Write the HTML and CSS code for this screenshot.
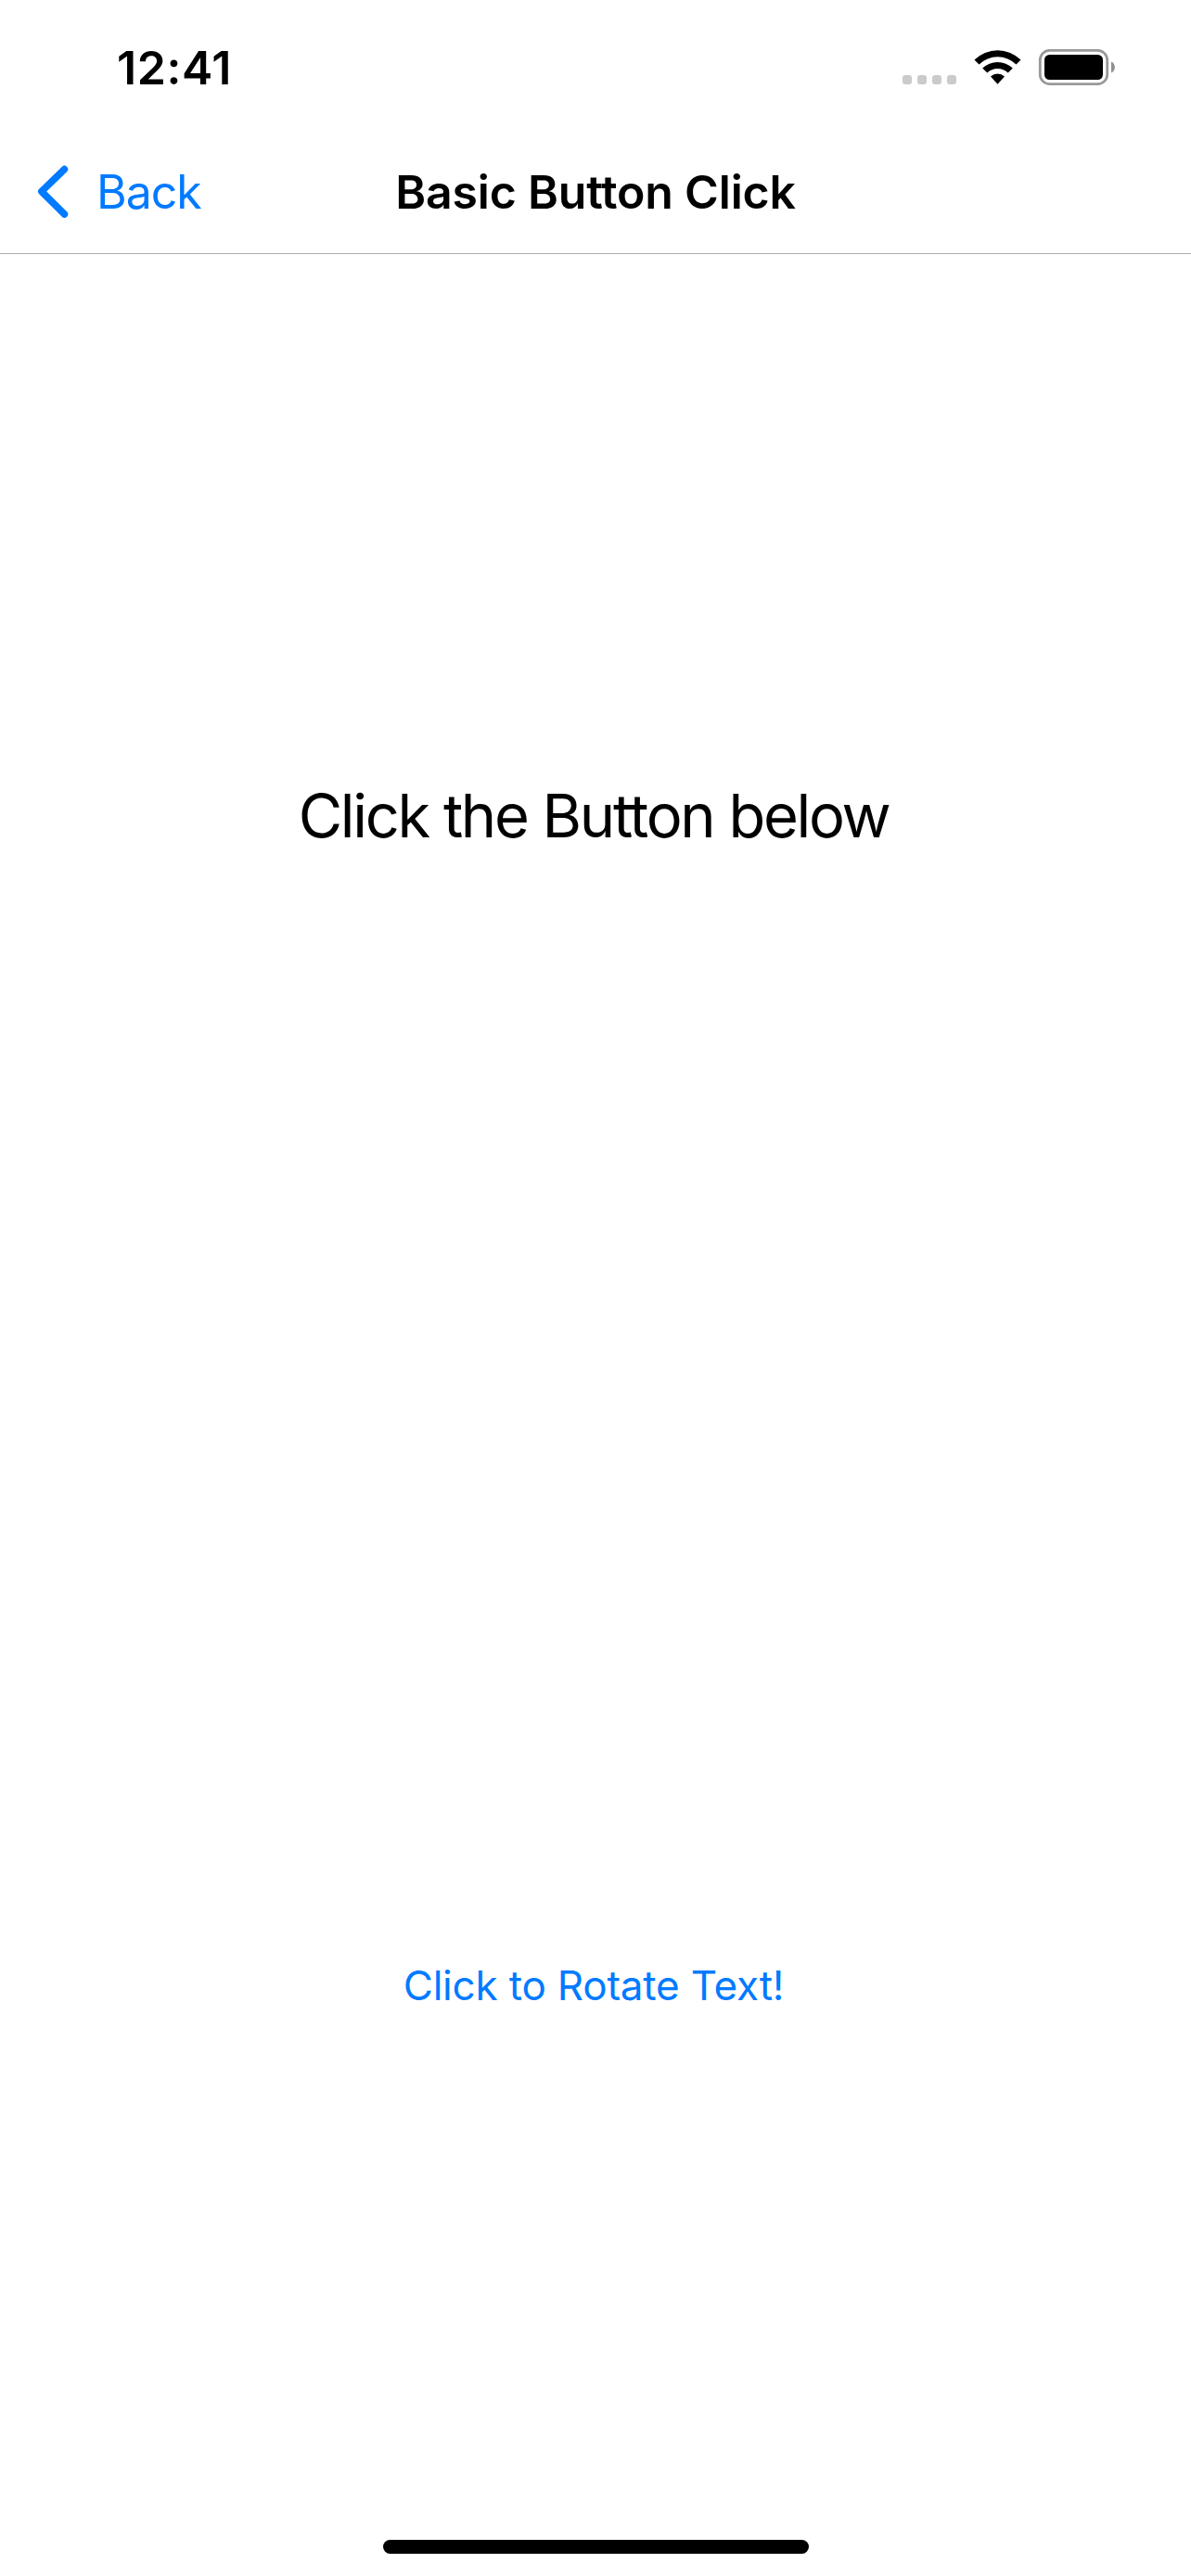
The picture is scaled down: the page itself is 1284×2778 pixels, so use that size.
FILE: index.html
```html
<!DOCTYPE html>
<html lang="en">
<head>
<meta charset="utf-8">
<title>Basic Button Click</title>
<link rel="stylesheet" href="styles.css">
</head>
<body>
<div class="screen">
  <div class="status-bar">
    <span class="time">12:41</span>
    <svg class="status-icons" width="230" height="40" viewBox="0 0 230 40">
      <g fill="#cbcbcb">
        <rect x="0" y="28" width="10" height="10" rx="3"/>
        <rect x="16" y="28" width="10" height="10" rx="3"/>
        <rect x="32" y="28" width="10" height="10" rx="3"/>
        <rect x="48" y="28" width="10" height="10" rx="3"/>
      </g>
      <path d="M77.500 11.500 A35.500 35.500 0 0 1 127.500 11.500 L122.500 16.500 A28.500 28.500 0 0 0 82.500 16.500 Z"/>
      <path d="M86.200 20.600 A23.300 23.300 0 0 1 118.800 20.600 L113.700 25.600 A16 16 0 0 0 91.300 25.600 Z"/>
      <path d="M95 29.400 A11.200 11.200 0 0 1 110 29.400 L102.500 37.700 Z"/>
      <rect x="148.300" y="1.300" width="72.400" height="36.400" rx="10.500" fill="none" stroke="#999" stroke-width="2.800"/>
      <rect x="153" y="6" width="63" height="27" rx="5.500"/>
      <path d="M225 13.500 C230.200 15.500 230.200 23.500 225 25.500 Z" fill="#8f8f8f"/>
    </svg>
  </div>
  <header class="nav-bar">
    <a class="back">
      <svg class="chevron" width="34" height="58" viewBox="0 0 34 58"><path d="M29.500 4.500 L4.800 28.500 L29.500 53" fill="none" stroke="currentColor" stroke-width="7.500" stroke-linecap="round" stroke-linejoin="round"/></svg>
      <span class="back-label">Back</span>
    </a>
    <h1 class="title">Basic Button Click</h1>
  </header>
  <main class="content">
    <p class="message">Click the Button below</p>
    <button class="rotate">Click to Rotate Text!</button>
  </main>
  <footer class="home"><div class="home-indicator"></div></footer>
</div>
</body>
</html>
```
FILE: styles.css
```css
* { box-sizing: border-box; }
body {
  margin: 0;
  background: #fff;
  color: #000;
  font-family: Inter, "Liberation Sans", sans-serif;
}
.screen {
  width: 1284px;
  height: 2778px;
  display: flex;
  flex-direction: column;
  overflow: hidden;
}
.status-bar {
  height: 141px;
  flex: none;
  display: flex;
  justify-content: space-between;
  align-items: flex-start;
  padding: 43px 81px 0 126px;
}
.time {
  font-size: 50px;
  line-height: 60px;
  font-weight: 600;
  letter-spacing: 0.6px;
}
.status-icons { margin-top: 10px; }
.nav-bar {
  height: 133px;
  flex: none;
  display: grid;
  grid-template-columns: 428px 428px 428px;
  align-items: center;
  border-bottom: 1px solid #acacac;
}
.back {
  display: flex;
  align-items: center;
  gap: 30px;
  padding-left: 40px;
  color: #007aff;
}
.back-label {
  font-size: 50px;
  line-height: 60px;
  letter-spacing: -1px;
}
.title {
  margin: 0;
  font-size: 50px;
  line-height: 60px;
  font-weight: 600;
  letter-spacing: -0.2px;
  white-space: nowrap;
  justify-self: center;
}
.content {
  flex: 1;
  display: flex;
  flex-direction: column;
  align-items: center;
  padding-top: 566px;
}
.message {
  margin: 0;
  padding-right: 4px;
  font-size: 65px;
  line-height: 80px;
  letter-spacing: -2.3px;
  white-space: nowrap;
}
.rotate {
  margin: 1191px 0 0;
  padding: 0 4px 0 0;
  border: 0;
  background: none;
  color: #007aff;
  font: inherit;
  font-size: 44px;
  line-height: 60px;
  letter-spacing: -0.2px;
  white-space: nowrap;
}
.home {
  flex: none;
  display: flex;
  justify-content: center;
  padding-bottom: 24px;
}
.home-indicator {
  width: 459px;
  height: 15px;
  border-radius: 8px;
  background: #000;
}
```
